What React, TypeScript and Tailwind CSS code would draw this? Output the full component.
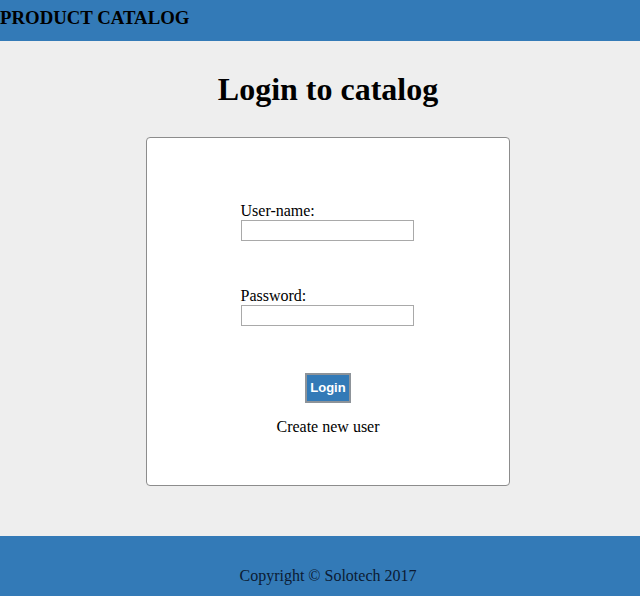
import React from 'react';

const serif = { fontFamily: '"Liberation Serif", "Times New Roman", serif' };

export default function App() {
  return (
    <div className="h-[596px] bg-[#eeeeee] flex flex-col text-black overflow-hidden" style={serif}>
      <header className="h-[41px] shrink-0 bg-[#337ab7] flex items-start">
        <span className="text-[18.8px] font-bold leading-[22px] mt-[7px]">PRODUCT CATALOG</span>
      </header>

      <main className="flex-1 pl-4 flex flex-col items-center">
        <h1 className="text-[32px] font-bold leading-[37px] mt-[30px] mb-[29px]">Login to catalog</h1>

        <div className="w-[364px] h-[349px] bg-white border border-[#8c8c8c] rounded-[4px] flex flex-col items-center pt-[64px]">
          <div className="w-[173px] mr-[2px] flex flex-col">
            <label className="text-[16px] leading-[18px]">User-name:</label>
            <input className="h-[21px] border border-[#a9a9a9] bg-white" type="text" />
            <label className="text-[16px] leading-[18px] mt-[46px]">Password:</label>
            <input className="h-[21px] border border-[#a9a9a9] bg-white" type="password" />
          </div>
          <button
            className="mt-[47px] w-[46px] h-[30px] bg-[#337ab7] border-2 border-[#8d9399] text-white text-[13px] font-bold"
            style={{ fontFamily: '"Liberation Sans", Arial, sans-serif' }}
          >
            Login
          </button>
          <span className="mt-[15px] text-[16px] leading-[18px]">Create new user</span>
        </div>
      </main>

      <footer className="h-[60px] shrink-0 bg-[#337ab7] pl-4 flex justify-center">
        <span className="mt-[31px] text-[16px] leading-[18px] text-[#0b1a33]">Copyright © Solotech 2017</span>
      </footer>
    </div>
  );
}
